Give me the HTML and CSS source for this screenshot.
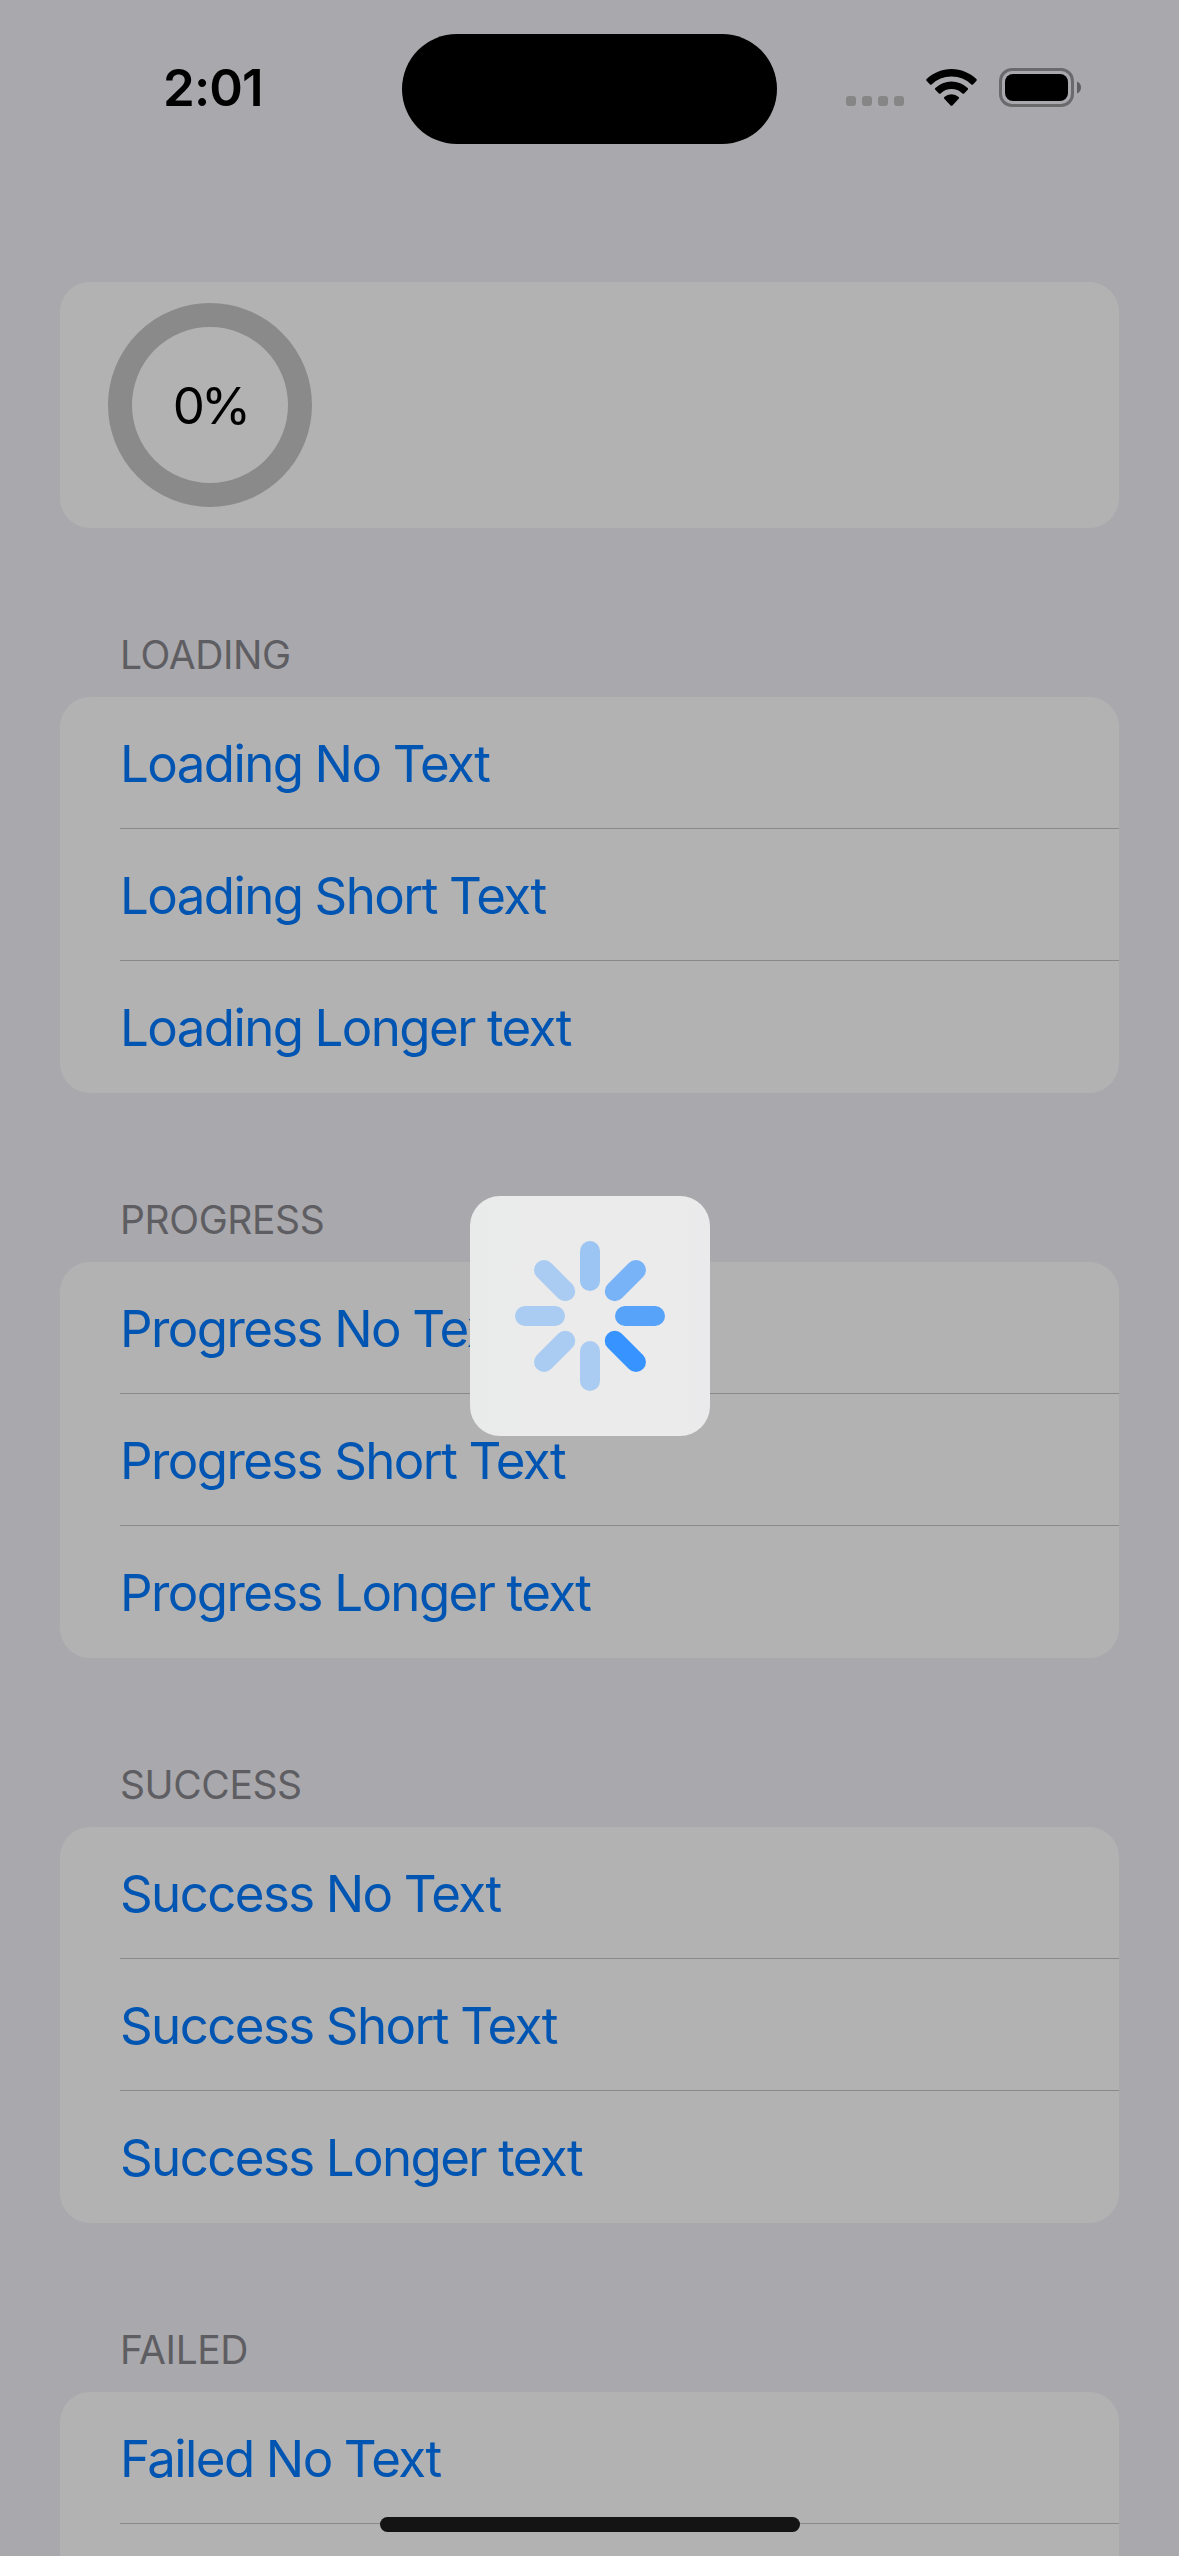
FILE: index.html
```html
<!DOCTYPE html>
<html lang="en">
<head>
<meta charset="utf-8">
<title>Loading HUD</title>
<link rel="stylesheet" href="styles.css">
</head>
<body>
<div class="screen">
  <header class="status-bar">
    <span class="clock">2:01</span>
    <div class="island"></div>
    <div class="indicators">
      <svg class="cellular" width="58" height="10" viewBox="0 0 58 10"><rect width="10" height="10" rx="3"/><rect x="16" width="10" height="10" rx="3"/><rect x="32" width="10" height="10" rx="3"/><rect x="48" width="10" height="10" rx="3"/></svg>
      <svg class="wifi" width="51" height="37" viewBox="0 0 51 37">
        <path d="M.6 10.1C7.2 3.8 16 0 25.5 0s18.300 3.800 24.900 10.100c.5.5.5 1.200.1 1.700l-3.500 3.600c-.4.5-1.100.5-1.600 0A28.400 28.400 0 0 0 25.500 7.500 28.400 28.400 0 0 0 5.600 15.400c-.5.5-1.200.5-1.600 0L.5 11.800c-.4-.5-.4-1.200.1-1.700z"/>
        <path d="M9.300 19.100a23.500 23.500 0 0 1 32.400 0c.5.5.5 1.200 0 1.700l-3.600 3.600c-.5.4-1.200.4-1.700 0a15.900 15.900 0 0 0-21.800 0c-.5.4-1.200.4-1.700 0l-3.600-3.600c-.5-.5-.5-1.200 0-1.700z"/>
        <path d="M18.300 28a11.100 11.100 0 0 1 14.400 0c.5.5.5 1.200 0 1.700l-6.300 6.700c-.5.5-1.300.5-1.800 0l-6.300-6.700c-.5-.5-.5-1.200 0-1.700z"/>
      </svg>
      <svg class="battery" width="82" height="39" viewBox="0 0 82 39">
        <rect class="shell" x="1.500" y="1.500" width="72" height="36" rx="11.500"/>
        <rect x="6" y="6" width="63" height="27" rx="8"/>
        <path class="cap" d="M78 13.500c2.500 1 4 3.300 4 6s-1.500 5-4 6z"/>
      </svg>
    </div>
  </header>

  <main class="list">
    <section class="card progress-card">
      <div class="ring">0%</div>
    </section>

    <h2 class="heading">LOADING</h2>
    <ul class="card">
      <li class="row">Loading No Text</li>
      <li class="row">Loading Short Text</li>
      <li class="row">Loading Longer text</li>
    </ul>

    <h2 class="heading">PROGRESS</h2>
    <ul class="card">
      <li class="row">Progress No Text</li>
      <li class="row">Progress Short Text</li>
      <li class="row">Progress Longer text</li>
    </ul>

    <h2 class="heading">SUCCESS</h2>
    <ul class="card">
      <li class="row">Success No Text</li>
      <li class="row">Success Short Text</li>
      <li class="row">Success Longer text</li>
    </ul>

    <h2 class="heading">FAILED</h2>
    <ul class="card">
      <li class="row">Failed No Text</li>
      <li class="row"></li>
    </ul>
  </main>

  <div class="hud">
    <svg width="150" height="150" viewBox="-75 -75 150 150">
      <rect x="-10" y="-75" width="20" height="50" rx="10" fill="#9cc5f3"/>
      <rect x="-10" y="-75" width="20" height="50" rx="10" fill="#78b3f8" transform="rotate(45)"/>
      <rect x="-10" y="-75" width="20" height="50" rx="10" fill="#57a3fa" transform="rotate(90)"/>
      <rect x="-10" y="-75" width="20" height="50" rx="10" fill="#3793ff" transform="rotate(135)"/>
      <rect x="-10" y="-75" width="20" height="50" rx="10" fill="#abccf2" transform="rotate(180)"/>
      <rect x="-10" y="-75" width="20" height="50" rx="10" fill="#abccf2" transform="rotate(225)"/>
      <rect x="-10" y="-75" width="20" height="50" rx="10" fill="#abccf2" transform="rotate(270)"/>
      <rect x="-10" y="-75" width="20" height="50" rx="10" fill="#abccf2" transform="rotate(315)"/>
    </svg>
  </div>
  <div class="home-indicator"></div>
</div>
</body>
</html>
```
FILE: styles.css
```css
* { box-sizing: border-box; }

body {
  margin: 0;
  background: #a9a8ad;
  font-family: Inter, "Liberation Sans", sans-serif;
}

.screen {
  position: relative;
  width: 1179px;
  height: 2556px;
  overflow: hidden;
}

.status-bar {
  display: flex;
  justify-content: space-between;
  height: 282px;
  padding: 34px 98px 0 163px;
}

.clock {
  width: 239px;
  padding-top: 23px;
  font-size: 51px;
  font-weight: 600;
  line-height: 62px;
  letter-spacing: -0.9px;
}

.island {
  width: 375px;
  height: 110px;
  border-radius: 55px;
  background: #000;
}

.indicators {
  display: flex;
  width: 304px;
  padding: 34px 0 0 69px;
}

.cellular { margin-top: 28px; fill: #868687; }
.wifi { margin: 1px 0 0 22px; }
.battery { margin-left: 22px; }
.shell { fill: none; stroke: #6a6a6c; stroke-width: 3; }
.cap { fill: #5f5f61; }

.list { padding: 0 60px; }

.card {
  margin: 0;
  padding: 0;
  list-style: none;
  border-radius: 30px;
  background: #b2b2b2;
  overflow: hidden;
}

.progress-card {
  height: 246px;
  padding: 21px 48px;
}

.ring {
  display: flex;
  align-items: center;
  justify-content: center;
  width: 204px;
  height: 204px;
  border: 24px solid #8a8a8b;
  border-radius: 50%;
  font-size: 51px;
  letter-spacing: -4px;
}

.heading {
  height: 169px;
  margin: 0;
  padding: 103px 60px 0;
  color: #5e5e62;
  font-size: 39px;
  font-weight: 400;
  line-height: 48px;
  letter-spacing: -0.4px;
}

.row {
  height: 132px;
  margin-left: 60px;
  border-bottom: 1px solid #89898a;
  color: #0055b2;
  font-size: 51px;
  line-height: 134px;
  letter-spacing: -1.6px;
  word-spacing: -0.5px;
}

.row:last-child { border-bottom: 0; }

.hud {
  position: absolute;
  top: 1196px;
  left: 470px;
  display: flex;
  align-items: center;
  justify-content: center;
  width: 240px;
  height: 240px;
  border-radius: 30px;
  background: linear-gradient(90deg, #e9ebea, #ebebeb 30%, #ebebeb 85%, #eaeaec);
}

.home-indicator {
  position: absolute;
  top: 2517px;
  left: 380px;
  width: 420px;
  height: 15px;
  border-radius: 8px;
  background: #141414;
}
```
